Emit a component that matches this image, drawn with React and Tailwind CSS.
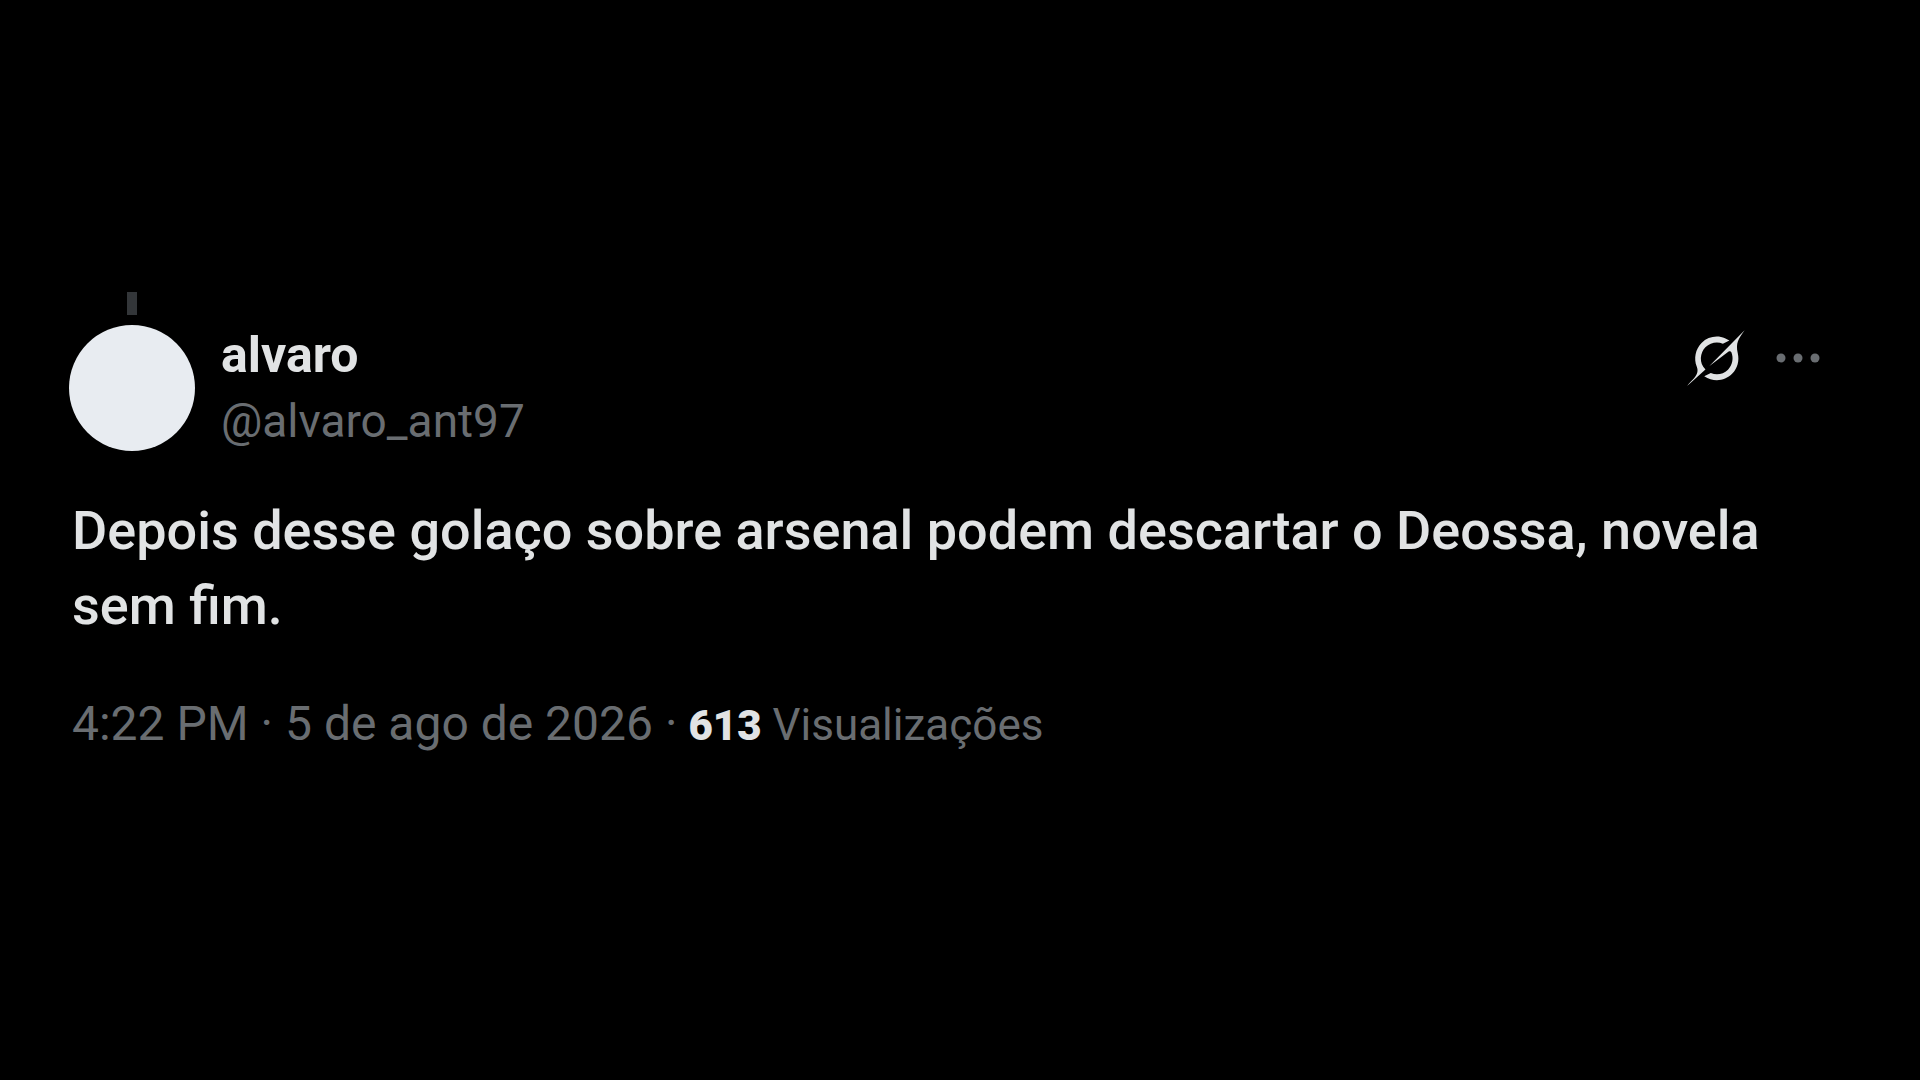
import React from "react";

const tweet = {
  name: "alvaro",
  handle: "@alvaro_ant97",
  text: "Depois desse golaço sobre arsenal podem descartar o Deossa, novela sem fim.",
  time: "4:22 PM",
  date: "5 de ago de 2026",
  views: "613",
};

function GrokIcon() {
  return (
    <svg viewBox="0 0 33 32" className="w-[58px] h-[56px]" fill="currentColor" aria-hidden="true">
      <path d="M12.745 20.54l10.97-8.19c.539-.4 1.307-.244 1.564.38 1.349 3.288.746 7.241-1.938 9.955-2.683 2.714-6.417 3.31-9.83 1.954l-3.728 1.745c5.347 3.697 11.84 2.782 15.898-1.324 3.219-3.255 4.216-7.692 3.284-11.693l.008.009c-1.351-5.878.332-8.227 3.782-13.031L33 0l-4.54 4.59v-.014L12.743 20.544m-2.263 1.987c-3.837-3.707-3.175-9.446.1-12.755 2.42-2.449 6.388-3.448 9.852-1.979l3.72-1.737c-.67-.49-1.53-1.017-2.515-1.387-4.455-1.854-9.789-.931-13.41 2.728-3.483 3.523-4.579 8.94-2.697 13.561 1.405 3.454-.899 5.898-3.22 8.364C1.49 30.2.666 31.074 0 32l10.478-9.466" />
    </svg>
  );
}

function MoreIcon() {
  return (
    <svg viewBox="0 0 48 12" className="w-[48px] h-[12px]" fill="currentColor" aria-hidden="true">
      <circle cx="7" cy="6" r="4.5" />
      <circle cx="24" cy="6" r="4.5" />
      <circle cx="41" cy="6" r="4.5" />
    </svg>
  );
}

function App() {
  return (
    <main className="min-h-screen bg-black px-[72px] pt-[292px] font-['Roboto','Liberation_Sans',sans-serif] text-[#e1e3e4]">
      <article>
        <header className="flex items-start">
          {/* thread line above the avatar */}
          <div className="flex flex-col items-center shrink-0 -ml-[3px]">
            <div className="w-[10px] h-[23px] bg-[#333639]" />
            <div className="mt-[10px] size-[126px] rounded-full bg-[#e8ecf1]" />
          </div>

          <div className="ml-[26px] mt-[30px] leading-[66px]">
            <h2 className="text-[50px] font-bold">{tweet.name}</h2>
            <p className="text-[46px] text-[#696d71]">{tweet.handle}</p>
          </div>

          <div className="ml-auto mt-[38px] mr-[26px] flex items-center gap-[29px]">
            <button type="button" aria-label="Grok">
              <GrokIcon />
            </button>
            <button type="button" aria-label="Mais" className="text-[#696d71]">
              <MoreIcon />
            </button>
          </div>
        </header>

        <p className="mt-[39px] pr-[24px] text-[54px] leading-[75px] font-medium">{tweet.text}</p>

        <p className="mt-[48px] flex items-baseline gap-[11px] text-[#696d71] leading-[66px]">
          <span className="text-[48px]">
            {tweet.time} · {tweet.date} ·
          </span>
          <span className="text-[42px] font-black text-[#e1e3e4]">{tweet.views}</span>
          <span className="text-[44px]">Visualizações</span>
        </p>
      </article>
    </main>
  );
}

export default App;
